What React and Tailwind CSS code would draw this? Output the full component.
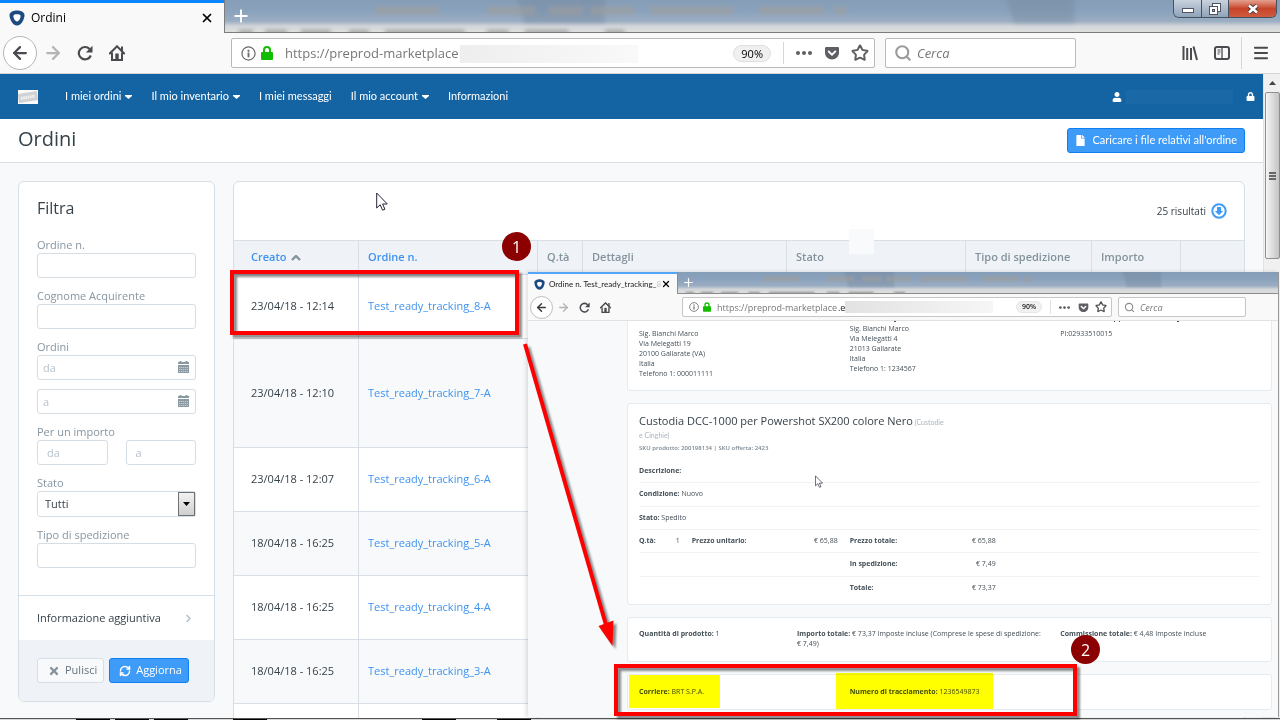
import React from 'react';
import { X, Plus, ArrowLeft, ArrowRight, Star, Menu, RefreshCw, Search } from 'lucide-react';
import { FaUser, FaLock, FaFile, FaTimes, FaChevronRight, FaGetPocket } from 'react-icons/fa';

const navItems = [
  { label: 'I miei ordini', menu: true },
  { label: 'Il mio inventario', menu: true },
  { label: 'I miei messaggi', menu: false },
  { label: 'Il mio account', menu: true },
  { label: 'Informazioni', menu: false },
];

const orders = [
  { created: '23/04/18 - 12:14', id: 'Test_ready_tracking_8-A' },
  { created: '23/04/18 - 12:10', id: 'Test_ready_tracking_7-A', tall: true },
  { created: '23/04/18 - 12:07', id: 'Test_ready_tracking_6-A' },
  { created: '18/04/18 - 16:25', id: 'Test_ready_tracking_5-A' },
  { created: '18/04/18 - 16:25', id: 'Test_ready_tracking_4-A' },
  { created: '18/04/18 - 16:25', id: 'Test_ready_tracking_3-A' },
];

const Shield = ({ className }) => (
  <svg viewBox="0 0 16 16" className={className}>
    <path d="M8 .5C11 .5 15.5 1.8 15.5 5c0 4-3 10.5-7.5 10.5S.5 9 .5 5C.5 1.8 5 .5 8 .5z" fill="#1d4a80" />
    <path d="M8 4.2c1.8 0 3.6.4 3.6 1.8 0 1.9-1.5 5.4-3.6 5.4S4.4 7.9 4.4 6c0-1.4 1.8-1.8 3.6-1.8z" fill="#fff" />
  </svg>
);

const Reload = ({ className }) => (
  <svg viewBox="0 0 16 16" className={className}>
    <path d="M12.6 4A6.2 6.2 0 1 0 13.8 10.5" fill="none" stroke="#4a4a4f" strokeWidth="2.2" />
    <path d="M15.5 0.8v6.7H8.8z" fill="#4a4a4f" />
  </svg>
);

const Home = ({ className }) => (
  <svg viewBox="0 0 16 16" className={className}>
    <path d="M.8 8.5L8 1.3l7.2 7.2" fill="none" stroke="#4a4a4f" strokeWidth="2" strokeLinecap="round" />
    <path d="M3 7.5V15h10V7.5" fill="none" stroke="#4a4a4f" strokeWidth="2" />
    <path d="M6.3 8.5h3.4V15H6.3z" fill="#4a4a4f" />
    <path d="M12 1.5h2V6h-2z" fill="#4a4a4f" />
  </svg>
);

const Info = ({ className }) => (
  <svg viewBox="0 0 16 16" className={className}>
    <circle cx="8" cy="8" r="7" fill="none" stroke="#6a6a6e" strokeWidth="1.3" />
    <path d="M7 7h2v5H7zM7 4h2v2H7z" fill="#6a6a6e" />
  </svg>
);

const Padlock = ({ className }) => (
  <svg viewBox="0 0 12 14" className={className}>
    <path d="M3 7V4a3 3 0 0 1 6 0v3" fill="none" stroke="#12bc00" strokeWidth="2" />
    <rect x="0" y="6" width="12" height="8" rx="1" fill="#12bc00" />
  </svg>
);

const Dots = ({ className }) => (
  <svg viewBox="0 0 16 4" className={className} fill="#5f5f63">
    <circle cx="2" cy="2" r="2" />
    <circle cx="8" cy="2" r="2" />
    <circle cx="14" cy="2" r="2" />
  </svg>
);

const CalendarIcon = () => (
  <svg viewBox="0 0 11 12" className="absolute right-[7px] top-[6px] h-3 w-[11px]" fill="#8b99a3">
    <path d="M1.5 0h2v1h4V0h2v1H11v2H0V1h1.5zM0 4h11v8H0z" />
    <path d="M1 6.5h9M1 8.5h9M1 10.5h9" stroke="#fff" strokeWidth=".5" strokeDasharray="1.4 .6" />
  </svg>
);

const Pointer = ({ className }) => (
  <svg viewBox="0 0 12 19" className={className}>
    <path d="M.7 1v15l3.5-3.2 2.4 5.4 2.3-1-2.3-5.2h4.7z" fill="#fff" stroke="#23233a" strokeWidth="1" />
  </svg>
);

// Glass title bar with the window behind it showing through
const GlassBar = () => (
  <svg className="absolute inset-0 h-full w-full" viewBox="0 0 1056 33" preserveAspectRatio="none">
    <defs>
      <linearGradient id="glass" x1="0" y1="0" x2="0" y2="1">
        <stop offset="0" stopColor="#869db7" />
        <stop offset=".35" stopColor="#8aa2bd" />
        <stop offset=".66" stopColor="#9badc2" />
        <stop offset=".82" stopColor="#d3d6da" />
        <stop offset="1" stopColor="#dedede" />
      </linearGradient>
      <filter id="soft" x="-5%" y="-200%" width="110%" height="500%">
        <feGaussianBlur stdDeviation="2" />
      </filter>
    </defs>
    <rect width="1056" height="33" fill="url(#glass)" />
    <g filter="url(#soft)">
      <path d="M290 -8h90v32H300zM780 -8h70v32H790z" fill="#6c8098" opacity=".35" />
      <path d="M150 11h64M262 11h48M324 11h34M366 11h44M426 11h82M534 11h66M610 11h12" stroke="#a09f9c" strokeWidth="8" opacity=".6" />
      <path d="M14 33h14M40 33h22M76 33h30M124 33h20M160 33h80M262 33h22M300 33h44M380 33h20" stroke="#555" strokeWidth="3" opacity=".6" />
    </g>
  </svg>
);

const WindowButtons = () => (
  <div className="absolute right-[3px] top-0 flex h-[18px] overflow-hidden rounded-b-md border border-t-0 border-[#46525f]">
    <button aria-label="Riduci a icona" className="flex w-7 items-end justify-center border-r border-[#46525f] bg-linear-to-b from-[#c8d2dd] to-[#8fa3b8] pb-1">
      <span className="h-[5px] w-3 border border-[#4c5561] bg-white" />
    </button>
    <button aria-label="Ripristina" className="flex w-[27px] items-center justify-center border-r border-[#46525f] bg-linear-to-b from-[#c8d2dd] to-[#8fa3b8]">
      <svg viewBox="0 0 12 12" className="size-3" fill="#fff" stroke="#4c5561">
        <rect x="3.5" y=".5" width="8" height="8" />
        <rect x=".5" y="3.5" width="8" height="8" />
        <rect x="3.5" y="6.5" width="2" height="2" fill="#8fa3b8" />
      </svg>
    </button>
    <button aria-label="Chiudi finestra" className="flex w-[47px] items-center justify-center bg-linear-to-b from-[#e3a090] via-[#c7442a] to-[#cf5a3c]">
      <svg viewBox="0 0 12 10" className="h-[10px] w-3">
        <path d="M2 1.5l8 7M10 1.5l-8 7" stroke="#4b3b3b" strokeWidth="4.5" />
        <path d="M2 1.5l8 7M10 1.5l-8 7" stroke="#fff" strokeWidth="2.6" />
      </svg>
    </button>
  </div>
);

function MainBrowserBar() {
  return (
    <>
      <div className="flex h-[33px] shrink-0">
        <div className="flex w-56 items-center border-t-[3px] border-[#0a84ff] bg-[#f9f9f9] pl-[9px] pr-[10px]">
          <Shield className="size-4" />
          <span className="ml-[6px] flex-1 text-xs text-black">Ordini</span>
          <button aria-label="Chiudi scheda"><X size={14} strokeWidth={3} className="text-black" /></button>
        </div>
        <div className="relative flex flex-1 items-center border-b border-l border-[#7c7c7c]">
          <GlassBar />
          <button aria-label="Nuova scheda" className="relative ml-[6px] text-white"><Plus size={20} strokeWidth={2.2} /></button>
          <WindowButtons />
        </div>
      </div>

      <div className="flex h-[41px] shrink-0 items-center border-b border-[#d5d5d5] bg-[#f9f9f9] pl-[3px] pr-[3px]">
        <button aria-label="Indietro" className="flex size-[34px] items-center justify-center rounded-full border border-[#b5b5b5] bg-white">
          <ArrowLeft size={20} strokeWidth={2.7} className="text-[#4a4a4f]" />
        </button>
        <button aria-label="Avanti" className="flex w-8 justify-center"><ArrowRight size={20} strokeWidth={2.7} className="text-[#b5b5b7]" /></button>
        <button aria-label="Ricarica" className="flex w-8 justify-center"><Reload className="size-4" /></button>
        <button aria-label="Pagina iniziale" className="flex w-8 justify-center"><Home className="size-4" /></button>

        <div className="ml-[98px] flex h-[30px] flex-1 items-center rounded-xs border border-[#b9b9b9] bg-white pl-[9px] pr-[5px]">
          <Info className="size-[15px]" />
          <Padlock className="ml-[5px] h-[14px] w-3" />
          <div className="relative ml-3 flex-1 pt-[2px]">
            <input aria-label="Indirizzo" readOnly value="https://preprod-marketplace" className="block w-full text-[13px] text-[#77777a] outline-none" />
            <span className="absolute left-[175px] top-[3px] h-[18px] w-[178px] bg-linear-to-r from-[#eeeeee] to-[#f9f9f9]" />
          </div>
          <span className="rounded-full border border-[#dedede] bg-[#f0f0f0] px-[7px] text-[11px] leading-[15px] text-black">90%</span>
          <span className="ml-3 h-[22px] w-px bg-[#d7d7db]" />
          <button aria-label="Azioni pagina" className="ml-3"><Dots className="h-1 w-4" /></button>
          <button aria-label="Pocket" className="ml-3"><FaGetPocket size={16} className="text-[#5f5f63]" /></button>
          <button aria-label="Segnalibro" className="ml-[11px]"><Star size={18} strokeWidth={2.6} className="text-[#5f5f63]" /></button>
        </div>

        <div className="ml-[10px] flex h-[30px] w-[191px] items-center rounded-xs border border-[#b9b9b9] bg-white pl-2">
          <Search size={18} strokeWidth={2.8} className="text-[#9a9a9c]" />
          <input aria-label="Cerca" placeholder="Cerca" className="ml-[5px] block w-32 pt-[2px] text-[13px] italic outline-none placeholder:text-[#77777a]" />
        </div>

        <button aria-label="Libreria" className="ml-[98px] flex w-8 justify-center">
          <svg viewBox="0 0 16 16" className="size-4" fill="none" stroke="#4a4a4f" strokeWidth="2">
            <path d="M1.5 1v14M5.2 3v12M9 3v12M11.5 1.5L15 15" />
          </svg>
        </button>
        <button aria-label="Barra laterale" className="flex w-8 justify-center">
          <svg viewBox="0 0 16 14" className="h-[14px] w-4" fill="none" stroke="#4a4a4f">
            <rect x="1" y="1" width="14" height="12" rx="2" strokeWidth="2" />
            <path d="M8 1v12" strokeWidth="1.3" />
            <path d="M3.5 4h3M3.5 6h3M3.5 8h2" />
          </svg>
        </button>
        <span className="ml-[3px] h-8 w-px bg-[#d7d7db]" />
        <button aria-label="Apri menu" className="ml-[3px] flex w-8 justify-center">
          <Menu size={18} strokeWidth={2.8} className="text-[#4a4a4f]" />
        </button>
      </div>
    </>
  );
}

function Field({ id, label, children }) {
  return (
    <div className="flex flex-col">
      <label htmlFor={id} className="text-[11px] leading-4 text-[#8795a0]">{label}</label>
      {children}
    </div>
  );
}

const inputClass = 'block w-full rounded-[3px] border border-[#d5dde5] bg-white text-[11px] outline-none placeholder:text-[#b8c2cb]';

function Filters() {
  return (
    <form className="w-[197px] shrink-0 self-start overflow-hidden rounded-md border border-[#d5dfe7] bg-white">
      <div className="px-[18px] pb-[27px] pt-[14px]">
        <h2 className="mb-[17px] text-base leading-6 text-[#36424a]">Filtra</h2>
        <div className="flex flex-col gap-[10px]">
          <Field id="order" label="Ordine n."><input id="order" className={`${inputClass} h-[25px] px-[5px]`} /></Field>
          <Field id="surname" label="Cognome Acquirente"><input id="surname" className={`${inputClass} h-[25px] px-[5px]`} /></Field>
          <Field id="from" label="Ordini">
            <div className="relative">
              <input id="from" placeholder="da" className={`${inputClass} h-[25px] px-[5px]`} />
              <CalendarIcon />
            </div>
            <div className="relative mt-[9px]">
              <input aria-label="Ordini a" placeholder="a" className={`${inputClass} h-[25px] px-[5px]`} />
              <CalendarIcon />
            </div>
          </Field>
          <Field id="min" label="Per un importo">
            <div className="grid grid-cols-2 gap-[18px]">
              <input id="min" placeholder="da" className={`${inputClass} h-[25px] px-[9px]`} />
              <input aria-label="Importo a" placeholder="a" className={`${inputClass} h-[25px] px-[9px]`} />
            </div>
          </Field>
          <Field id="state" label="Stato">
            <div className="relative">
              <select id="state" className={`${inputClass} h-[26px] appearance-none px-[7px] text-[#36424a]`}>
                <option>Tutti</option>
              </select>
              <span className="pointer-events-none absolute right-px top-px flex h-6 w-[17px] items-center justify-center border border-[#707070] bg-linear-to-b from-[#f2f2f2] to-[#cfcfcf]">
                <svg viewBox="0 0 7 4" className="h-1 w-[7px]"><path d="M0 0h7L3.5 4z" /></svg>
              </span>
            </div>
          </Field>
          <Field id="shipping" label="Tipo di spedizione"><input id="shipping" className={`${inputClass} h-[25px] px-[5px]`} /></Field>
        </div>
      </div>
      <button type="button" className="flex h-[45px] w-full items-center justify-between border-t border-[#d5dfe7] pl-[18px] pr-[21px] text-[11px] text-[#36424a]">
        Informazione aggiuntiva
        <FaChevronRight size={9} className="text-[#b4bec6]" />
      </button>
      <div className="flex gap-[5px] bg-[#eff3f7] px-[18px] py-[18px]">
        <button type="button" className="flex h-[25px] items-center gap-[5px] rounded-[3px] border border-[#d5dfe7] bg-[#f7f9fb] pl-[10px] pr-[6px] text-[11px] text-[#66747e]">
          <FaTimes size={12} className="text-[#84929c]" />
          Pulisci
        </button>
        <button type="button" className="flex h-[25px] items-center gap-[5px] rounded-[3px] border border-[#0d7ff2] bg-[#3f9bf8] pl-[9px] pr-[6px] text-[11px] text-white">
          <RefreshCw size={12} strokeWidth={3} />
          Aggiorna
        </button>
      </div>
    </form>
  );
}

const th = 'h-[34px] border-b border-r border-[#d8dfe7] bg-[#eff3f7] pl-[9px] text-left text-[11px] font-semibold text-[#84929c]';

function OrdersTable() {
  return (
    <section className="min-w-0 flex-1 rounded-t-md border border-[#d5dfe7] bg-white">
      <div className="flex h-[58px] items-center justify-end gap-[5px] pr-[17px] text-[10px] font-medium text-[#36424a]">
        25 risultati
        <button aria-label="Scarica">
          <svg viewBox="0 0 16 16" className="size-4">
            <circle cx="8" cy="8" r="6.7" fill="#fff" stroke="#3f9bf8" strokeWidth="2" />
            <path d="M6 4h4v4h2.2L8 12.3 3.8 8H6z" fill="#3f9bf8" />
          </svg>
        </button>
      </div>
      <table className="w-full table-fixed border-separate border-spacing-0 border-t border-[#d8dfe7]">
        <colgroup>
          <col className="w-[125px]" />
          <col className="w-[179px]" />
          <col className="w-[45px]" />
          <col className="w-[204px]" />
          <col className="w-[179px]" />
          <col className="w-[126px]" />
          <col className="w-[89px]" />
          <col />
        </colgroup>
        <thead>
          <tr>
            <th className={`${th} pl-[17px]`}>
              <a href="#creato" className="flex items-center gap-1 text-[#3f93ee]">
                Creato
                <svg viewBox="0 0 10 6" className="h-[6px] w-[10px]"><path d="M1 5l4-4 4 4" fill="none" stroke="#84929c" strokeWidth="2.4" /></svg>
              </a>
            </th>
            <th className={th}><a href="#ordine" className="text-[#3f93ee]">Ordine n.</a></th>
            <th className={th}>Q.tà</th>
            <th className={th}>Dettagli</th>
            <th className={th}>Stato</th>
            <th className={th}>Tipo di spedizione</th>
            <th className={th}>Importo</th>
            <th className="border-b border-[#d8dfe7] bg-[#eff3f7]"></th>
          </tr>
        </thead>
        <tbody>
          {orders.map((o) => (
            <tr key={o.id} className="even:bg-[#f7f9fb]">
              <td className={`${o.tall ? 'h-[109px]' : 'h-16'} border-b border-r border-[#d8dfe7] pl-[17px] text-[11px] text-[#36424a]`}>{o.created}</td>
              <td className="border-b border-r border-[#d8dfe7] pl-[9px] text-[11px]"><a href={`#${o.id}`} className="text-[#3f93ee]">{o.id}</a></td>
              <td colSpan={6} className="border-b border-[#d8dfe7]"></td>
            </tr>
          ))}
          <tr>
            <td className="h-16 border-r border-[#d8dfe7]"></td>
            <td className="border-r border-[#d8dfe7]"></td>
            <td colSpan={6}></td>
          </tr>
        </tbody>
      </table>
    </section>
  );
}

function ScrollBar() {
  return (
    <div className="flex w-[17px] shrink-0 flex-col items-center border-l border-[#e3e3e3] bg-[#f0f0f0]">
      <span className="flex h-[18px] items-center"><svg viewBox="0 0 7 4" className="h-1 w-[7px]"><path d="M0 4h7L3.5 0z" fill="#444" /></svg></span>
      <span className="flex h-[167px] w-[15px] flex-col items-center justify-center gap-px rounded-xs border border-[#8f8f8f] bg-linear-to-r from-[#f5f5f5] to-[#c4c4c4]">
        <i className="h-[2px] w-[7px] bg-[#666]" />
        <i className="h-[2px] w-[7px] bg-[#666]" />
        <i className="h-[2px] w-[7px] bg-[#666]" />
      </span>
    </div>
  );
}

function DetailRow({ last, children }) {
  return (
    <div className={`mr-3 ${last ? '' : 'border-b border-[#f1f3f5]'}`}>
      <div className="-mr-3 grid h-full grid-cols-12 items-center">{children}</div>
    </div>
  );
}

const card = 'rounded-[3px] border border-[#e6ebef] bg-white pl-[11px]';

function DetailWindow() {
  return (
    <div className="absolute bottom-[3px] left-[528px] right-px top-[272px] flex flex-col overflow-hidden border-r border-[#9a9a9a] bg-[#f7f9fb] shadow-[-2px_0_4px_rgba(0,0,0,0.12)]">
      <div className="flex h-[22px] shrink-0">
        <div className="flex w-[149px] items-center border-t-2 border-[#56a5f8] bg-[#f9f9f9] pl-[6px] pr-[6px]">
          <Shield className="size-[11px] shrink-0" />
          <span className="ml-1 flex-1 whitespace-nowrap font-[Lato,sans-serif] text-[8px] text-[#222]">
            Ordine n. Test_ready_tracking_<span className="text-[#c4c4c4]">8</span>
          </span>
          <button aria-label="Chiudi scheda"><X size={10} strokeWidth={3} className="text-black" /></button>
        </div>
        <div className="relative flex flex-1 items-center border-b border-l border-[#8c8c8c]">
          <GlassBar />
          <button aria-label="Nuova scheda" className="relative ml-1 text-white"><Plus size={13} strokeWidth={2.2} /></button>
        </div>
      </div>

      <div className="flex h-[27px] shrink-0 items-center border-b border-[#e2e2e2] bg-[#f9f9f9] pl-[2px] pr-8">
        <button aria-label="Indietro" className="flex size-[23px] items-center justify-center rounded-full border border-[#bdbdbd] bg-white">
          <ArrowLeft size={13} strokeWidth={2.7} className="text-[#3a3a3f]" />
        </button>
        <button aria-label="Avanti" className="flex w-[21px] justify-center"><ArrowRight size={13} strokeWidth={2.4} className="text-[#b5b5b7]" /></button>
        <button aria-label="Ricarica" className="flex w-[21px] justify-center"><Reload className="size-[11px]" /></button>
        <button aria-label="Pagina iniziale" className="flex w-[21px] justify-center"><Home className="size-[11px]" /></button>

        <div className="ml-[66px] flex h-5 flex-1 items-center rounded-xs border border-[#c6c6c6] bg-white pl-[6px] pr-1">
          <Info className="size-[10px]" />
          <Padlock className="ml-1 h-[10px] w-2" />
          <input aria-label="Indirizzo" readOnly value="https://preprod-marketplace" className="ml-[6px] block w-[121px] pt-px text-[9px] text-[#77777a] outline-none" />
          <span className="pt-px text-[9px] text-[#222]">.e</span>
          <span className="h-3 w-[148px] bg-linear-to-r from-[#e2e2e2] to-[#f6f6f6]" />
          <span className="flex-1" />
          <span className="rounded-full border border-[#e6e6e6] bg-[#f0f0f0] px-[5px] text-[7px] font-semibold leading-[10px] text-[#222]">90%</span>
          <span className="ml-2 h-[14px] w-px bg-[#e1e1e4]" />
          <button aria-label="Azioni pagina" className="ml-2"><Dots className="h-[3px] w-[11px]" /></button>
          <button aria-label="Pocket" className="ml-2"><FaGetPocket size={11} className="text-[#5f5f63]" /></button>
          <button aria-label="Segnalibro" className="ml-[6px]"><Star size={12} strokeWidth={2.6} className="text-[#4f4f53]" /></button>
        </div>
        <div className="ml-[6px] flex h-5 w-32 items-center rounded-xs border border-[#c6c6c6] bg-white pl-[5px]">
          <Search size={11} strokeWidth={2.4} className="text-[#8a8a8c]" />
          <input aria-label="Cerca" placeholder="Cerca" className="ml-[5px] block w-20 pt-px text-[9px] italic outline-none placeholder:text-[#77777a]" />
        </div>
      </div>

      <div className="ml-[99px] mr-[6px] flex flex-col gap-3 text-[7px] leading-[10px] text-[#444f57]">
        <div className="relative grid h-[70px] grid-cols-3 rounded-b-[3px] border border-t-0 border-[#e6ebef] bg-white pl-[11px]">
          <svg viewBox="0 0 645 2" className="absolute left-0 top-0 h-[2px] w-[645px]" fill="#444f57">
            <path d="M266 0h2v1h-2zM486 0h1v1h-1zM491 0h1v1h-1zM549 0h2v1h-2z" />
          </svg>
          <address className="pt-2 not-italic">
            Sig. Bianchi Marco<br />Via Melegatti 19<br />20100 Gallarate (VA)<br />Italia<br />Telefono 1: 000011111
          </address>
          <address className="pt-[3px] not-italic">
            Sig. Bianchi Marco<br />Via Melegatti 4<br />21013 Gallarate<br />Italia<br />Telefono 1: 1234567
          </address>
          <p className="pt-2">PI:02933510015</p>
        </div>

        <div className={card}>
          <div className="w-[308px] pt-[10px]">
            <h2 className="text-[7px] leading-[13px] text-[#a9b5be]">
              <span className="text-[11px] text-[#36424a]">Custodia DCC-1000 per Powershot SX200 colore Nero</span>
              <span className="font-[Lato,sans-serif]"> (Custodie<br />e Cinghie)</span>
            </h2>
            <p className="text-[6px] font-semibold leading-[13px] text-[#7b8790]">SKU prodotto: 200198134 | SKU offerta: 2423</p>
          </div>
          <div className="mb-1 mt-[5px] grid h-[140px] grid-rows-6">
            <DetailRow><p className="col-span-12"><b>Descrizione:</b></p></DetailRow>
            <DetailRow><p className="col-span-12"><b>Condizione:</b> Nuovo</p></DetailRow>
            <DetailRow><p className="col-span-12"><b>Stato:</b> Spedito</p></DetailRow>
            <DetailRow>
              <p className="flex justify-between pr-3"><b>Q.tà:</b> 1</p>
              <p className="col-span-3 flex justify-between pr-3"><b>Prezzo unitario:</b> € 65,88</p>
              <p className="col-span-3 flex justify-between pr-3"><b>Prezzo totale:</b> € 65,88</p>
            </DetailRow>
            <DetailRow><p className="col-span-3 col-start-5 flex justify-between pr-3"><b>In spedizione:</b> € 7,49</p></DetailRow>
            <DetailRow last><p className="col-span-3 col-start-5 flex justify-between pr-3"><b>Totale:</b> € 73,37</p></DetailRow>
          </div>
        </div>

        <div className={`${card} grid h-[45px] grid-cols-12 pt-[11px]`}>
          <p className="col-span-3"><b>Quantità di prodotto:</b> 1</p>
          <p className="col-span-5 pr-3"><b>Importo totale:</b> € 73,37 Imposte incluse (Comprese le spese di spedizione: €&nbsp;7,49)</p>
          <p className="col-span-4"><b>Commissione totale:</b> € 4,48 Imposte incluse</p>
        </div>

        <div className={`${card} grid h-9 grid-cols-3 items-center`}>
          <p><b>Corriere:</b> BRT S.P.A.</p>
          <p><b>Numero di tracciamento:</b> 1236549873</p>
        </div>
      </div>
    </div>
  );
}

// Tutorial markings drawn over the two windows
function Annotations() {
  return (
    <div className="pointer-events-none absolute inset-0">
      <span className="absolute left-[849px] top-[229px] h-[25px] w-[25px] bg-[#f9fafc]" />
      <Pointer className="absolute left-[376px] top-[192px] h-[19px] w-3" />
      <Pointer className="absolute left-[815px] top-[475px] h-[13px] w-2" />
      <span className="absolute left-[629px] top-[675px] h-[33px] w-[91px] bg-[#ffff00] mix-blend-multiply" />
      <span className="absolute left-[836px] top-[673px] h-9 w-[157px] bg-[#ffff00] mix-blend-multiply" />
      <svg viewBox="0 0 1280 720" className="absolute left-0 top-0 h-[720px] w-[1280px] drop-shadow-[3px_3px_1px_rgba(0,0,0,0.45)]">
        <g fill="none" stroke="#fe0000" strokeWidth="4">
          <rect x="232" y="272" width="285" height="61" />
          <rect x="616" y="666" width="459" height="48" />
          <path d="M525 344L606 625" />
        </g>
        <path d="M598.5 626L613.5 620.5 612.5 646z" fill="#fe0000" />
      </svg>
      <span className="absolute left-[502px] top-[232px] flex size-[29px] items-center justify-center rounded-full bg-[#8b0000] text-base text-white">1</span>
      <span className="absolute left-[1071px] top-[635px] flex size-[29px] items-center justify-center rounded-full bg-[#8b0000] text-base text-white">2</span>
    </div>
  );
}

export default function App() {
  return (
    <div className="relative flex h-screen flex-col overflow-hidden bg-[#f7f9fb] font-['Open_Sans',sans-serif]">
      <MainBrowserBar />

      <div className="flex min-h-0 flex-1">
        <div className="min-w-0 flex-1 overflow-hidden">
          <nav className="flex h-[45px] items-center bg-[#1464a3] pl-[18px] pr-2 font-[Lato,sans-serif] text-[11px] text-white">
            <svg viewBox="0 0 20 14" className="mr-[27px] h-[14px] w-5">
              <rect width="20" height="14" fill="#fbfbfb" />
              <path d="M0 4L19 1l1 9-19 3z" fill="#cfd1d4" />
              <path d="M3 8.5L17 6" stroke="#f4f4f4" strokeWidth="3" strokeDasharray="1.5 .8" />
            </svg>
            <div className="flex gap-[19px]">
              {navItems.map((item) => (
                <a key={item.label} href="#menu" className="flex items-center gap-1">
                  {item.label}
                  {item.menu && <svg viewBox="0 0 7 4" className="h-1 w-[7px]" fill="#fff"><path d="M0 0h7v1L3.5 4 0 1z" /></svg>}
                </a>
              ))}
            </div>
            <FaUser size={10} className="ml-auto" />
            <span className="ml-1 h-[14px] w-[107px] bg-[#1a68a6]" />
            <FaLock size={9} className="ml-[13px]" />
          </nav>

          <header className="flex h-11 items-center justify-between border-b border-[#d5dfe7] bg-white pl-[18px] pr-[18px]">
            <h1 className="pb-1 text-xl text-[#36424a]">Ordini</h1>
            <button className="flex h-[25px] items-center gap-[7px] rounded-[3px] border border-[#0d7ff2] bg-[#3f9bf8] px-[7px] font-[Lato,sans-serif] text-[11px] text-white">
              <FaFile size={11} />
              Caricare i file relativi all'ordine
            </button>
          </header>

          <main className="flex gap-[18px] px-[18px] pt-[18px]">
            <Filters />
            <OrdersTable />
          </main>
        </div>
        <ScrollBar />
      </div>

      <div className="relative h-[2px] shrink-0 border-t border-[#555] bg-[#d9d9d9]">
        <div className="flex h-px gap-[5px] pl-[76px]">
          <i className="h-px w-[34px] bg-black" />
          <i className="h-px w-[34px] bg-black" />
          <i className="h-px w-[34px] bg-black" />
          <i className="ml-10 h-px w-[34px] bg-black" />
          <i className="ml-[150px] h-px w-[34px] bg-black" />
          <i className="ml-9 h-px w-[34px] bg-black" />
        </div>
      </div>

      <DetailWindow />
      <Annotations />
    </div>
  );
}
